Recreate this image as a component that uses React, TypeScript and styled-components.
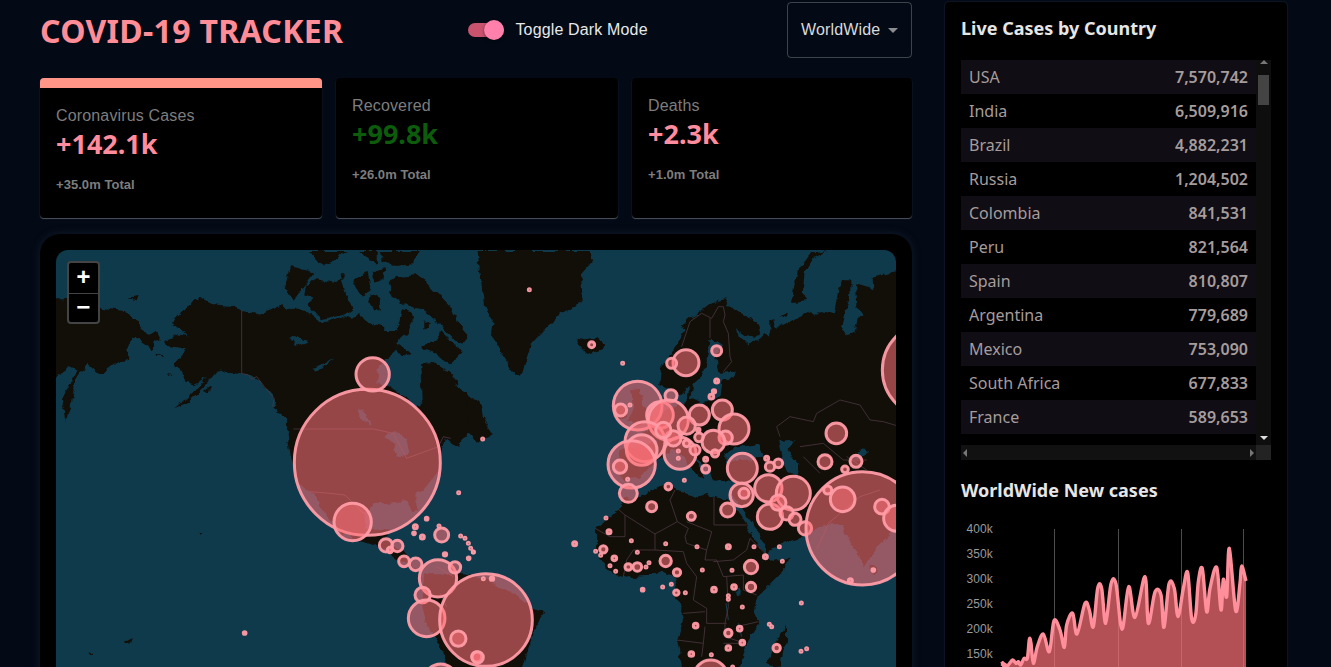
import * as React from "react";
import styled, { createGlobalStyle } from "styled-components";

const GlobalStyle = createGlobalStyle`
	html, body {
		margin: 0;
		height: 667px;
		overflow: hidden;
		background: #040a15;
	}
	* {
		box-sizing: border-box;
	}
`;

const UI_FONT = `"Liberation Sans", Arial, sans-serif`;
const HEAD_FONT = `"Noto Sans", "Open Sans", sans-serif`;

const Page = styled.div`
	display: flex;
	gap: 33px;
	padding: 2px 44px 0 40px;
	font-family: ${UI_FONT};
	letter-spacing: 0.15px;
`;

const Left = styled.main`
	width: 872px;
	flex: none;
`;

const Header = styled.header`
	display: flex;
	align-items: center;
	justify-content: space-between;
	height: 56px;
	margin-bottom: 20px;
`;

const Title = styled.h1`
	margin: 2px 0 0;
	font: 700 32px/56px ${HEAD_FONT};
	letter-spacing: 0.3px;
	color: #ff8d98;
	white-space: nowrap;
`;

const ToggleWrap = styled.label`
	display: flex;
	align-items: center;
	gap: 11px;
	margin-right: 14px;
	color: #e6e8ea;
	font-size: 16px;
`;

const Track = styled.span`
	position: relative;
	display: block;
	width: 36px;
	height: 14px;
	border-radius: 7px;
	background: #c9526f;
`;

const Thumb = styled.span`
	position: absolute;
	top: -3px;
	right: 0;
	width: 20px;
	height: 20px;
	border-radius: 50%;
	background: #ff80ab;
	box-shadow: 0 1px 3px rgba(0, 0, 0, 0.5);
`;

const Select = styled.div`
	display: flex;
	align-items: center;
	justify-content: space-between;
	width: 125px;
	height: 56px;
	padding: 0 13px 0 13px;
	border: 1px solid rgba(255, 255, 255, 0.23);
	border-radius: 4px;
	color: #d8dadc;
	font-size: 16px;
`;

const Caret = styled.span`
	width: 0;
	height: 0;
	border-left: 5px solid transparent;
	border-right: 5px solid transparent;
	border-top: 5px solid #8b8d90;
`;

const Stats = styled.section`
	display: grid;
	grid-template-columns: 282px 282px 280px;
	gap: 14px;
	margin-bottom: 16px;
`;

const StatCard = styled.article<{ $selected?: boolean }>`
	height: 140px;
	padding: 16px;
	border-radius: 4px;
	background: #000;
	box-shadow: 0 1px 1px rgba(190, 195, 205, 0.4);
	${(p) => p.$selected && "border-top: 10px solid #ff9587;"}
`;

const StatLabel = styled.div`
	font-size: 16px;
	line-height: 24px;
	color: #7d7d7d;
`;

const StatValue = styled.div<{ $green?: boolean }>`
	font: 700 27px/32px ${HEAD_FONT};
	letter-spacing: 0;
	color: ${(p) => (p.$green ? "#0c5c0c" : "#ff8d9e")};
`;

const StatTotal = styled.div`
	margin-top: 15px;
	font-size: 13px;
	font-weight: 700;
	line-height: 20px;
	letter-spacing: 0.05px;
	color: #7d7d7d;
`;

const MapCard = styled.section`
	padding: 16px;
	border-radius: 20px;
	background: #000;
	box-shadow: 0 0 8px rgba(40, 60, 90, 0.35);
`;

const MapFrame = styled.div`
	position: relative;
	height: 560px;
	border-radius: 12px;
	overflow: hidden;
	background: #0f3a4c;
`;

const MapSvg = styled.svg`
	display: block;
	width: 840px;
	height: 560px;
`;

const ZoomBox = styled.div`
	position: absolute;
	top: 11px;
	left: 11px;
	width: 33px;
	border: 2px solid #444;
	border-radius: 4px;
	background: #000;
`;

const ZoomButton = styled.div`
	display: flex;
	align-items: center;
	justify-content: center;
	height: 29.5px;
	padding-top: 3px;
	color: #fff;
	font: 700 24px/1 "Liberation Mono", monospace;
	& + & {
		border-top: 1px solid #444;
	}
`;

const Side = styled.aside`
	width: 342px;
	flex: none;
	height: 800px;
	padding: 16px;
	border-radius: 4px;
	background: #000;
	box-shadow: 0 0 2px rgba(60, 80, 110, 0.6);
`;

const SideTitle = styled.h3`
	margin: 0;
	font: 700 18px/20px ${HEAD_FONT};
	letter-spacing: 0;
	color: #e6e6e6;
	white-space: nowrap;
`;

const TableBox = styled.div`
	display: grid;
	grid-template-columns: 295px 15px;
	grid-template-rows: 385px 15px;
	margin: 22px 0 20px;
`;

const TableView = styled.div`
	overflow: hidden;
`;

const Row = styled.div<{ $odd: boolean }>`
	display: flex;
	justify-content: space-between;
	height: 34px;
	padding: 0 8px;
	background: ${(p) => (p.$odd ? "#100d14" : "#000")};
	font: 400 16px/34px ${HEAD_FONT};
	letter-spacing: 0;
	color: #a69c9c;
`;

const Amount = styled.strong`
	font-weight: 600;
`;

const BarV = styled.div`
	position: relative;
	background: #0e0e0e;
`;

const BarH = styled.div`
	position: relative;
	background: #111;
`;

const BarCorner = styled.div`
	background: #232323;
`;

const BarThumb = styled.div`
	position: absolute;
	top: 15px;
	left: 2px;
	width: 11px;
	height: 30px;
	background: #444;
`;

const Arrow = styled.span<{ $dir: "up" | "down" | "left" | "right" }>`
	position: absolute;
	width: 0;
	height: 0;
	border: 4px solid transparent;
	${(p) => p.$dir === "up" && "top: 0; left: 4px; border-top: 0; border-bottom-color: #777;"}
	${(p) => p.$dir === "down" && "bottom: 5px; left: 4px; border-bottom: 0; border-top-color: #ddd;"}
	${(p) => p.$dir === "left" && "top: 4px; left: 2px; border-left: 0; border-right-color: #777;"}
	${(p) => p.$dir === "right" && "top: 4px; right: 2px; border-right: 0; border-left-color: #777;"}
`;

const ChartSvg = styled.svg`
	display: block;
	margin-top: 15px;
`;

const AxisText = styled.text`
	font: 12px ${UI_FONT};
	fill: #9a9a9a;
	text-anchor: end;
`;

const rows: [string, string][] = [
	["USA", "7,570,742"],
	["India", "6,509,916"],
	["Brazil", "4,882,231"],
	["Russia", "1,204,502"],
	["Colombia", "841,531"],
	["Peru", "821,564"],
	["Spain", "810,807"],
	["Argentina", "779,689"],
	["Mexico", "753,090"],
	["South Africa", "677,833"],
	["France", "589,653"],
	["Chile", ""],
];

// Everything on the map is traced at 3x, so each layer is [page x, page y, shapes]
type Layer = [number, number, string[]];

const WEST: [number, number] = [30, 230];
const EAST: [number, number] = [470, 230];
const ARCTIC: [number, number] = [270, 250];
const ALASKA: [number, number] = [56, 290];
const NORTH: [number, number] = [640, 250];
const AFRICA: [number, number] = [590, 480];

const land: Layer[] = [
	[
		...ALASKA,
		[
			"M-20,25 L60,25 L130,50 L200,60 L240,90 L270,130 L300,120 L312,145 L292,150 L285,175 L265,160 L235,140 L210,170 L220,210 L170,215 L130,250 L90,215 L65,250 L50,290 L45,340 L25,390 L15,325 L30,295 L65,235 L30,225 L10,255 L-20,265 Z",
			"M295,190 L322,198 L300,197 Z",
			"M215,20 L245,15 L240,28 Z",
			"M440,300 L462,285 L455,305 Z",
			"M335,250 L350,252 L340,258 Z",
		],
	],
	[
		...WEST,
		[
			"M423,275 L448,250 L478,215 L503,200 L538,218 L598,225 L634,240 L678,250 L720,235 L740,225 L755,220 L770,240 L790,230 L820,240 L855,265 L870,275 L895,270 L935,255 L960,260 L985,250 L1010,275 L1055,285 L1070,300 L1105,300 L1115,275 L1110,240 L1130,260 L1100,330 L1095,360 L1065,385 L1040,410 L1035,460 L1080,470 L1130,500 L1150,530 L1175,510 L1172,420 L1170,400 L1210,395 L1260,430 L1295,480 L1350,520 L1360,600 L1310,605 L1280,650 L1245,620 L1230,680 L1215,730 L1190,765 L1150,790 L1160,840 L1145,850 L1130,810 L1030,820 L1000,850 L1005,890 L1060,900 L1085,893 L1065,925 L1110,960 L1150,1010 L1175,1030 L1150,1012 L1100,985 L1040,945 L980,930 L930,900 L880,850 L850,790 L800,760 L780,680 L768,600 L768,560 L728,530 L733,505 L703,470 L681,442 L634,430 L588,425 L568,415 L548,440 L533,445 L518,470 L488,500 L458,520 L430,532 L480,490 L528,440 L488,460 L463,455 L453,420 L428,405 L468,355 L448,350 L408,345 L403,330 L440,310 L468,315 Z",
			"M1180,1030 L1300,1030 L1360,1040 L1450,1090 L1500,1130 L1540,1145 L1510,1200 L1480,1300 L1450,1400 L1270,1400 L1235,1250 L1185,1180 L1170,1120 Z",
			"M505,905 L515,910 L508,914 Z",
			"M280,1233 L300,1222 L292,1238 Z",
			"M170,1258 L190,1272 L178,1272 Z",
		],
	],
	[
		...ARCTIC,
		[
			"M60,45 L130,65 L85,125 L65,145 L45,115 Z",
			"M105,100 L140,85 L190,95 L210,80 L225,130 L250,170 L225,190 L150,205 L110,160 L130,145 L100,130 Z",
			"M245,85 L290,60 L300,120 L270,135 Z",
			"M305,60 L345,55 L330,90 L310,95 Z",
			"M300,130 L325,145 L330,175 L305,175 L295,150 Z",
			"M115,0 L230,0 L215,10 L160,45 L145,35 Z",
			"M265,0 L320,0 L320,35 L295,30 Z",
			"M330,0 L440,0 L430,40 L370,45 L335,30 Z",
			"M205,70 L225,70 L218,90 Z",
			"M380,75 L430,70 L470,100 L510,140 L545,175 L560,215 L595,255 L575,280 L520,240 L490,200 L450,175 L400,160 L360,130 L350,90 Z",
			"M395,175 L420,180 L425,205 L410,250 L385,262 L378,235 Z",
			"M455,280 L500,270 L510,240 L560,290 L575,310 L540,340 L500,310 L455,295 Z",
			"M380,275 L420,310 L405,315 L385,310 L375,295 Z",
			"M460,215 L480,212 L472,235 L460,232 Z",
		],
	],
	[
		...EAST,
		[
			"M20,60 L350,60 L370,85 L330,130 L335,210 L270,250 L230,285 L180,340 L150,435 L130,430 L90,370 L60,310 L65,270 L40,230 Z",
			"M315,320 L345,325 L375,320 L400,335 L395,355 L350,372 L325,340 Z",
			"M-10,505 L40,560 L65,610 L20,635 L-10,600 Z",
			"M565,460 L570,405 L605,370 L640,300 L630,280 L675,250 L720,215 L760,205 L785,235 L820,250 L860,275 L870,305 L850,320 L825,315 L795,295 L800,315 L830,340 L850,335 L870,320 L880,310 L895,310 L895,270 L910,265 L915,295 L960,270 L1020,240 L1035,255 L1050,240 L1088,250 L1100,190 L1116,145 L1138,145 L1138,190 L1122,250 L1110,300 L1120,315 L1150,305 L1160,265 L1175,255 L1160,235 L1155,160 L1190,170 L1225,185 L1232,235 L1210,230 L1205,140 L1290,115 L1290,880 L1225,940 L1180,1010 L1140,940 L1110,880 L1070,880 L1010,900 L990,920 L930,940 L885,965 L885,940 L850,885 L810,830 L790,800 L780,780 L790,750 L730,745 L715,715 L695,695 L665,665 L690,720 L700,745 L680,735 L640,680 L610,655 L585,670 L560,690 L530,710 L510,740 L460,745 L435,710 L450,650 L520,645 L555,630 L510,610 L555,585 L580,545 L620,520 L650,510 L650,470 L630,490 L590,470 Z",
			"M960,215 L980,120 L1015,70 L1070,60 L1030,80 L1000,130 L995,190 L1005,210 L980,215 Z",
			"M930,250 L947,245 L945,260 Z",
			"M480,475 L505,470 L515,520 L545,565 L500,585 L470,570 L490,530 Z",
			"M440,520 L465,525 L465,560 L435,565 Z",
			"M1202,1000 L1215,1010 L1212,1030 L1202,1025 Z",
			"M890,1300 L905,1250 L945,1185 L945,1230 L925,1311 Z",
		],
	],
	[
		...AFRICA,
		[
			"M50,110 L85,85 L100,55 L140,50 L230,5 L260,30 L320,50 L345,35 L375,50 L410,55 L440,90 L465,130 L490,175 L525,225 L540,240 L595,230 L585,260 L545,300 L500,345 L490,385 L505,430 L465,490 L455,530 L430,600 L280,600 L260,480 L280,400 L245,345 L260,290 L210,270 L165,285 L95,290 L50,265 L15,205 L15,145 L45,115 Z",
		],
	],
];

const water: Layer[] = [
	[...WEST, ["M1060,615 L1095,600 L1125,625 L1135,665 L1100,680 L1090,640 Z", "M980,535 L1005,540 L1015,585 L995,570 Z"]],
	[...ARCTIC, ["M55,255 L110,270 L75,285 Z", "M125,350 L190,325 L135,360 Z"]],
	[
		...EAST,
		[
			"M925,630 L970,625 L950,660 L985,700 L975,735 L950,720 L935,680 Z",
			"M762,672 L790,650 L860,640 L878,680 L800,685 L765,700 Z",
			"M715,330 L735,330 L755,345 L735,375 L745,425 L795,422 L790,436 L755,448 L748,500 L690,515 L660,500 L668,455 L700,425 L710,370 Z",
			"M1140,680 L1175,655 L1195,665 L1160,685 Z",
		],
	],
	[...AFRICA, ["M438,322 L450,325 L448,345 L436,342 Z"]],
];

const borders: Layer[] = [
	[...WEST, ["M635,240 L635,430 L655,435 L665,448 L680,440 L703,470 L733,505 L728,530", "M790,597 L1030,597 L1090,610 L1130,685 L1225,650 L1240,620 L1262,625", "M840,785 L900,790 L945,795 L1000,850", "M1230,1090 L1250,1130 M1220,1010 L1270,1040"]],
	[...NORTH, ["M125,290 L150,215 L185,190 L215,205 L235,170 L250,170 L255,195 L250,215 L265,250 L270,320 L275,335 L250,365", "M210,205 L210,265"]],
	[
		...EAST,
		[
			"M1290,590 L1240,575 L1200,570 L1170,525 L1110,510 L1040,550 L1030,575 L960,560 L920,590 L930,620",
			"M990,650 L1060,640 L1120,690 L1190,690 M1190,720 L1130,680 M1000,680 L1050,730",
			"M1040,960 L1075,880 L1170,800 L1230,780",
		],
	],
	[
		...AFRICA,
		[
			"M85,88 L105,105 L195,162 L262,125 L295,145 L285,170 L290,190 L350,210 L365,155 L290,125",
			"M372,50 L372,135 L470,135",
			"M262,125 L240,60 L255,30",
			"M105,105 L105,170 L60,170 L15,145",
			"M195,160 L195,210 L130,210 L110,240 L100,290",
			"M195,210 L280,215 L290,250 L320,290",
			"M350,210 L345,240 L380,240 L400,290 L460,285",
			"M370,245 L430,240 L470,210 L480,175 L530,225",
			"M460,285 L460,330 L500,345",
			"M320,290 L310,360 L350,385 L350,430 L410,430",
			"M410,290 L415,380 L405,430 L405,470 L465,490",
			"M280,400 L345,395 M260,480 L340,490 L345,440",
			"M340,490 L335,530 M400,490 L455,490 M440,440 L505,425",
		],
	],
];

const rivers: Layer[] = [[...AFRICA, ["M408,370 L415,420", "M445,430 L455,470"]]];

type Dot = [number, number, number];

const circlesWest: Dot[] = [
	[1012, 697, 223], [1028, 433, 54], [968, 876, 60], [1286, 788, 7], [1190, 866, 8], [1156, 890, 10], [1152, 910, 8],
	[1177, 921, 10], [1235, 915, 25], [1227, 888, 7], [1068, 946, 24], [1102, 948, 21], [1080, 960, 12], [1122, 994, 20],
	[1157, 1003, 23], [1224, 1045, 60], [1275, 1012, 21], [1178, 1095, 27], [1190, 1165, 59], [1368, 1170, 143],
	[1285, 1226, 27], [1340, 1280, 19], [1292, 918, 7], [1305, 925, 7], [1315, 940, 7], [1322, 955, 7], [1330, 966, 7],
	[1316, 985, 8], [1245, 973, 9], [1232, 1352, 54], [644, 1209, 8],
];

const circlesEast: Dot[] = [
	[178, 179, 7], [365, 344, 13], [458, 400, 7], [648, 398, 43], [605, 400, 19], [740, 362, 19], [740, 453, 10],
	[732, 484, 9], [724, 500, 11], [603, 497, 22], [503, 527, 77], [452, 540, 22], [480, 525, 7], [570, 555, 44],
	[595, 570, 64], [525, 635, 64], [515, 660, 50], [485, 703, 75], [450, 710, 24], [473, 748, 7], [630, 670, 52],
	[688, 555, 34], [650, 587, 30], [757, 540, 34], [792, 597, 49], [767, 623, 24], [730, 635, 38], [687, 622, 17],
	[685, 600, 9], [707, 717, 16], [735, 670, 15], [707, 688, 10], [675, 660, 19], [650, 640, 14], [625, 663, 7],
	[625, 685, 7], [610, 625, 27], [580, 600, 27], [475, 790, 31], [595, 770, 14], [545, 830, 19], [643, 751, 7],
	[664, 859, 16], [773, 840, 25], [817, 715, 49], [815, 795, 39], [822, 790, 19], [895, 775, 45], [970, 790, 55],
	[900, 860, 42], [925, 818, 27], [950, 850, 24], [975, 868, 22], [1005, 895, 24], [890, 685, 10], [900, 710, 18],
	[925, 700, 17], [1099, 610, 35], [1065, 695, 25], [1158, 694, 22], [1125, 718, 14], [1178, 895, 174], [1118, 808, 41],
	[1073, 780, 16], [1236, 830, 26], [1280, 865, 43], [1380, 420, 147], [1210, 1020, 8], [1141, 1052, 10],
	[408, 864, 7], [417, 905, 10], [484, 932, 7], [587, 941, 7], [681, 950, 7], [775, 950, 10], [852, 950, 7],
	[928, 950, 7], [314, 941, 10], [377, 964, 7], [400, 958, 15], [392, 976, 7], [433, 985, 11], [502, 967, 7],
	[587, 993, 21], [886, 980, 10], [937, 994, 7], [843, 1011, 24], [475, 1011, 14], [502, 1011, 17], [537, 998, 7],
	[528, 1011, 7], [420, 1007, 7], [437, 1024, 7], [621, 1027, 15], [697, 1020, 7], [786, 1021, 7], [518, 1079, 8],
	[578, 1071, 7], [604, 1063, 7], [619, 1088, 12], [646, 1088, 7], [732, 1079, 11], [792, 1071, 11], [843, 1071, 18],
	[775, 1097, 7], [775, 1108, 7], [817, 1131, 7], [994, 1119, 7], [677, 1187, 11], [809, 1196, 11], [775, 1209, 15],
	[817, 1238, 11], [775, 1254, 11], [664, 1272, 11], [724, 1274, 7], [920, 1254, 15], [898, 1183, 7], [905, 1190, 7],
	[993, 1264, 7], [1010, 1256, 7], [722, 1340, 54], [788, 1311, 7], [38, 627, 7], [40, 1046, 7], [66, 1046, 9],
	[23, 1282, 21], [10, 966, 7],
];

const traced = [
	[215, 845], [225, 860], [235, 855], [248, 840], [258, 850], [265, 845], [272, 855], [282, 835], [292, 835], [298, 778],
	[303, 790], [310, 850], [322, 800], [340, 762], [358, 815], [372, 722], [390, 750], [403, 802], [410, 735], [428, 700],
	[441, 762], [465, 670], [478, 690], [490, 740], [503, 625], [515, 625], [527, 730], [543, 612], [558, 612], [576, 748],
	[596, 620], [615, 712], [645, 590], [655, 730], [675, 636], [693, 645], [702, 742], [717, 612], [733, 625], [744, 710],
	[760, 625], [773, 578], [785, 716], [797, 705], [805, 605], [817, 566], [830, 695], [840, 625], [860, 562], [873, 690],
	[880, 598], [890, 650], [898, 505], [917, 692], [930, 610], [935, 558], [948, 603],
].map(([x, y]): [number, number] => [930 + x / 3, 380 + y / 3]);

function smooth(points: [number, number][]) {
	let d = `M${points[0][0]},${points[0][1]}`;
	for (let i = 0; i < points.length - 1; i++) {
		const p0 = points[i - 1] || points[i];
		const p1 = points[i];
		const p2 = points[i + 1];
		const p3 = points[i + 2] || p2;
		d += ` C${p1[0] + (p2[0] - p0[0]) / 6},${p1[1] + (p2[1] - p0[1]) / 6} ${p2[0] - (p3[0] - p1[0]) / 6},${p2[1] - (p3[1] - p1[1]) / 6} ${p2[0]},${p2[1]}`;
	}
	return d;
}

function Shapes({ layers, ...paint }: { layers: Layer[] } & React.SVGProps<SVGPathElement>) {
	return (
		<>
			{layers.map(([x, y, shapes]) => (
				<g key={`${x}-${y}`} transform={`translate(${x} ${y}) scale(0.33333)`}>
					{shapes.map((d, i) => (
						<path key={i} d={d} {...paint} />
					))}
				</g>
			))}
		</>
	);
}

function Circles({ at, dots }: { at: [number, number]; dots: Dot[] }) {
	return (
		<g transform={`translate(${at[0]} ${at[1]}) scale(0.33333)`}>
			{dots.map(([cx, cy, r], i) => (
				<circle
					key={i}
					cx={cx}
					cy={cy}
					r={Math.max(r - 4, 3)}
					fill="rgba(255, 114, 121, 0.56)"
					stroke="#ff9ca7"
					strokeOpacity="0.95"
					strokeWidth="9"
				/>
			))}
		</g>
	);
}

function WorldMap() {
	return (
		<MapFrame>
			<MapSvg viewBox="56 250 840 560">
				<defs>
					<filter id="coast" filterUnits="userSpaceOnUse" x="0" y="200" width="960" height="660" colorInterpolationFilters="sRGB">
						<feTurbulence type="fractalNoise" baseFrequency="0.11" numOctaves="3" seed="7" />
						<feDisplacementMap in="SourceGraphic" scale="7" xChannelSelector="R" yChannelSelector="G" />
					</filter>
				</defs>
				<g transform="translate(1 1)">
					<g filter="url(#coast)">
						<Shapes layers={land} fill="#120e08" />
						<Shapes layers={water} fill="#0f3a4c" />
					</g>
				</g>
				<Shapes layers={borders} fill="none" stroke="#4a3840" strokeWidth="2.4" />
				<Shapes layers={rivers} fill="none" stroke="#1d4a63" strokeWidth="2.4" />
				<Circles at={WEST} dots={circlesWest} />
				<Circles at={EAST} dots={circlesEast} />
			</MapSvg>
			<ZoomBox>
				<ZoomButton>+</ZoomButton>
				<ZoomButton>−</ZoomButton>
			</ZoomBox>
		</MapFrame>
	);
}

function CasesChart() {
	const line = smooth(traced);
	const ticks = ["400k", "350k", "300k", "250k", "200k", "150k"];
	return (
		<ChartSvg width="310" height="280" viewBox="961 515 310 280">
			{[1054, 1118, 1181, 1243].map((x) => (
				<line key={x} x1={x + 0.5} x2={x + 0.5} y1="529" y2="780" stroke="#4c4c4c" />
			))}
			{ticks.map((t, i) => (
				<AxisText key={t} x="993" y={532.5 + i * 25}>
					{t}
				</AxisText>
			))}
			<path d={`${line} L1246,790 L1002,790 L1002,664 Z`} fill="rgba(255, 114, 121, 0.7)" />
			<path d={line} fill="none" stroke="#ff8f9a" strokeWidth="3.4" strokeLinejoin="round" />
			<path d="M1002,666 L1003,663 L1006,665 L1002,669" fill="none" stroke="#ff8f9a" strokeWidth="3" />
		</ChartSvg>
	);
}

export default function App() {
	return (
		<Page>
			<GlobalStyle />
			<Left>
				<Header>
					<Title>COVID-19 TRACKER</Title>
					<ToggleWrap>
						<Track>
							<Thumb />
						</Track>
						Toggle Dark Mode
					</ToggleWrap>
					<Select>
						WorldWide
						<Caret />
					</Select>
				</Header>
				<Stats>
					<StatCard $selected>
						<StatLabel>Coronavirus Cases</StatLabel>
						<StatValue>+142.1k</StatValue>
						<StatTotal>+35.0m Total</StatTotal>
					</StatCard>
					<StatCard>
						<StatLabel>Recovered</StatLabel>
						<StatValue $green>+99.8k</StatValue>
						<StatTotal>+26.0m Total</StatTotal>
					</StatCard>
					<StatCard>
						<StatLabel>Deaths</StatLabel>
						<StatValue>+2.3k</StatValue>
						<StatTotal>+1.0m Total</StatTotal>
					</StatCard>
				</Stats>
				<MapCard>
					<WorldMap />
				</MapCard>
			</Left>
			<Side>
				<SideTitle>Live Cases by Country</SideTitle>
				<TableBox>
					<TableView>
						{rows.map(([country, amount], i) => (
							<Row key={country} $odd={i % 2 === 0}>
								<span>{country}</span>
								<Amount>{amount}</Amount>
							</Row>
						))}
					</TableView>
					<BarV>
						<Arrow $dir="up" />
						<BarThumb />
						<Arrow $dir="down" />
					</BarV>
					<BarH>
						<Arrow $dir="left" />
						<Arrow $dir="right" />
					</BarH>
					<BarCorner />
				</TableBox>
				<SideTitle>WorldWide New cases</SideTitle>
				<CasesChart />
			</Side>
		</Page>
	);
}
